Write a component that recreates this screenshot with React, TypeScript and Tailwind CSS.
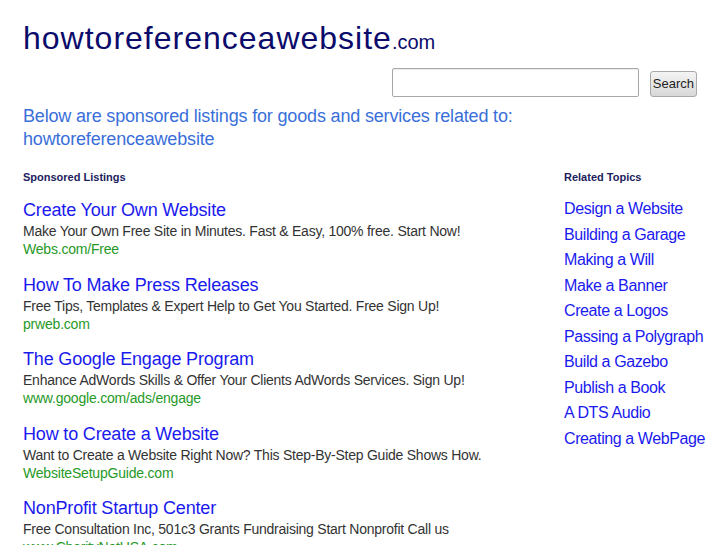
const listings = [
  {
    title: "Create Your Own Website",
    desc: "Make Your Own Free Site in Minutes. Fast & Easy, 100% free. Start Now!",
    url: "Webs.com/Free",
  },
  {
    title: "How To Make Press Releases",
    desc: "Free Tips, Templates & Expert Help to Get You Started. Free Sign Up!",
    url: "prweb.com",
  },
  {
    title: "The Google Engage Program",
    desc: "Enhance AdWords Skills & Offer Your Clients AdWords Services. Sign Up!",
    url: "www.google.com/ads/engage",
  },
  {
    title: "How to Create a Website",
    desc: "Want to Create a Website Right Now? This Step-By-Step Guide Shows How.",
    url: "WebsiteSetupGuide.com",
  },
  {
    title: "NonProfit Startup Center",
    desc: "Free Consultation Inc, 501c3 Grants Fundraising Start Nonprofit Call us",
    url: "www.CharityNetUSA.com",
  },
]

const topics = [
  "Design a Website",
  "Building a Garage",
  "Making a Will",
  "Make a Banner",
  "Create a Logos",
  "Passing a Polygraph",
  "Build a Gazebo",
  "Publish a Book",
  "A DTS Audio",
  "Creating a WebPage",
]

export default function App() {
  return (
    <div className="min-h-screen bg-white font-['Liberation_Sans',Arial,sans-serif] pl-[23px]">
      {/* header */}
      <h1 className="pt-[20px] text-[32px] leading-[37px] text-[#0b0b6b] font-normal">
        <span className="tracking-[1px]">howtoreferenceawebsite</span>
        <span className="text-[20px]">.com</span>
      </h1>

      <form className="flex justify-end items-center gap-[11px] pr-[30px] mt-[7px]" onSubmit={(e) => e.preventDefault()}>
        <input
          type="text"
          className="w-[247px] h-[29px] border border-[#a8a8a8] rounded-[2px] bg-white shadow-[inset_0_1px_1px_rgba(0,0,0,0.08)] outline-none"
        />
        <button
          type="submit"
          className="mt-[3px] h-[26px] px-[2px] text-[13px] text-[#222] border border-[#a9a9a9] rounded-[3px] bg-gradient-to-b from-[#f4f4f4] to-[#d8d8d8]"
        >
          Search
        </button>
      </form>

      <p className="mt-[8px] text-[18px] leading-[23px] text-[#3a6fd9] tracking-[-0.17px]">
        Below are sponsored listings for goods and services related to:
        <br />
        howtoreferenceawebsite
      </p>

      <div className="flex mt-[19px]">
        {/* sponsored */}
        <div className="flex-1 min-w-0">
          <h2 className="text-[11px] leading-[14px] font-bold text-[#1c1c5e]">Sponsored Listings</h2>
          <div className="mt-[15px] flex flex-col">
            {listings.map((l) => (
              <div key={l.title} className="mb-[15.5px]">
                <a href="#" className="block text-[18px] leading-[22px] text-[#1a1aee] tracking-[-0.17px]">
                  {l.title}
                </a>
                <div className="mt-[1px] text-[14px] leading-[18px] text-[#333] tracking-[-0.24px]">{l.desc}</div>
                <a href="#" className="block text-[14px] leading-[18px] text-[#279927] tracking-[-0.2px]">
                  {l.url}
                </a>
              </div>
            ))}
          </div>
        </div>

        {/* related */}
        <div className="w-[163px] shrink-0">
          <h2 className="text-[11px] leading-[14px] font-bold text-[#1c1c5e]">Related Topics</h2>
          <ul className="mt-[12px]">
            {topics.map((t) => (
              <li key={t}>
                <a href="#" className="block text-[16px] leading-[25.5px] text-[#1a1aee] whitespace-nowrap tracking-[-0.4px]">
                  {t}
                </a>
              </li>
            ))}
          </ul>
        </div>
      </div>
    </div>
  )
}
